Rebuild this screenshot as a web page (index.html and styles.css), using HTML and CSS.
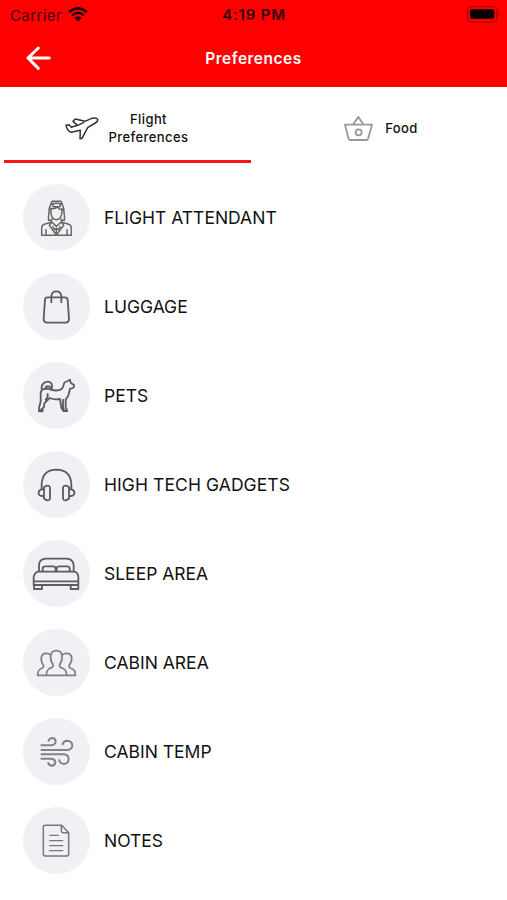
FILE: index.html
```html
<!DOCTYPE html>
<html lang="en">
<head>
<meta charset="utf-8">
<title>Preferences</title>
<link rel="stylesheet" href="styles.css">
</head>
<body>
<header class="header">
  <div class="status">
    <div class="carrier"><span>Carrier</span>
      <svg class="wifi" viewBox="0 0 60 44"><path d="M3 15Q30 -8 57 15" stroke-width="8"/><path d="M12 25Q30 9 48 25" stroke-width="7"/><path class="solid" d="M19 32Q30 23 41 32L30 43Z"/></svg>
    </div>
    <div class="time">4:19 PM</div>
    <svg class="battery" viewBox="0 0 99 51"><rect class="shell" x="2" y="2" width="88" height="46" rx="12"/><rect x="9" y="10" width="73" height="28" rx="5"/><path class="tip" d="M94 19q5 6 0 12z"/></svg>
  </div>
  <nav class="navbar">
    <svg class="back" viewBox="80 138 75 72"><path d="M150 174H86M117 144L86 174L117 205"/></svg>
    <h1 class="title">Preferences</h1>
  </nav>
</header>
<div class="tabs">
  <div class="tab active">
    <svg class="plane" viewBox="192 78 105 75"><path d="M198 106L207 104L214 112L233 106L219 94L226 87L255 94L275 85Q290 82 293 88Q294 94 286 99L263 113L246 145L240 146L241 121L214 127Q203 125 198 106ZM233 106L251 98"/></svg>
    <span class="tab-label">Flight<br>Preferences</span>
  </div>
  <div class="tab">
    <svg class="basket" viewBox="270 75 93 81"><path d="M276 104H357L345 147Q344 150 340 150H292Q288 150 287 147ZM301 103L316 81L331 103"/><circle cx="317" cy="127" r="9"/></svg>
    <span class="tab-label">Food</span>
  </div>
</div>
<main class="list">
  <div class="row">
    <svg class="icon" viewBox="21 18 201 201"><path d="M77 172V151Q77 141 87 138L107 132V124M166 172V151Q166 141 156 138L136 132V124M77 172H166M90 171V155M153 171V155M105 77L108 70H135L138 77M104 79Q121 73 139 79M104 80Q98 90 99 104Q96 114 98 127H107M139 80Q145 90 144 104Q147 114 145 127H136M105 92Q102 124 121 125Q140 124 138 92M104 91Q115 95 124 87Q128 95 140 95M111 79V86H132V79M107 132L100 142L121 171L143 142L136 132M107 132L121 145L136 132M110 146L116 155L121 151L127 155L133 146M121 151V170"/></svg>
    <span class="label">FLIGHT ATTENDANT</span>
  </div>
  <div class="row">
    <svg class="icon bold" viewBox="21 18 201 201"><path d="M94 91H147Q154 91 155 98L159 156Q159 167 148 167H94Q83 167 83 156L87 98Q88 91 94 91ZM106 106V88Q107 73 121 73Q135 73 136 88V106"/></svg>
    <span class="label">LUGGAGE</span>
  </div>
  <div class="row">
    <svg class="icon bold" viewBox="21 18 201 201"><path d="M105 101Q111 92 106 82Q99 74 87 79Q75 86 77 99M91 99Q86 94 92 91Q98 89 104 94M84 99Q94 95 105 101Q126 107 138 98Q142 94 144 82Q147 76 154 76L162 71L164 80L174 87V93Q171 98 162 98L158 115Q155 126 149 130V154L154 165H142L136 155L132 129Q113 132 101 126L85 142L84 153L79 158L80 166H69V155L74 137V116Q73 102 84 99ZM95 114Q97 124 89 131M141 131V154L145 164M77 159L72 165"/></svg>
    <span class="label">PETS</span>
  </div>
  <div class="row">
    <svg class="icon bold" viewBox="21 18 201 201"><path d="M77 132V117Q79 75 121 74Q164 75 166 117V132"/><path d="M84 126L93 122Q102 121 102 130V158Q102 167 93 166L84 161ZM159 126L150 122Q141 121 141 130V158Q141 167 150 166L159 161ZM83 133H77Q67 136 68 144Q67 151 77 153H83M160 133H166Q176 136 175 144Q176 151 166 153H160"/></svg>
    <span class="label wide">HIGH TECH GADGETS</span>
  </div>
  <div class="row">
    <svg class="icon bold" viewBox="21 18 201 201"><path d="M69 112V93Q70 75 90 74H152Q171 75 173 93V112M66 113H175Q187 116 187 130V153H53V130Q55 116 66 113ZM53 142H187M54 153V165H78V154M164 154V165H187V153M80 112V104Q80 97 88 97H111Q119 97 119 104V112M122 112V104Q122 97 130 97H153Q161 97 161 104V112"/></svg>
    <span class="label">SLEEP AREA</span>
  </div>
  <div class="row">
    <svg class="icon people" viewBox="21 18 201 201"><path d="M91 157C91 142 96 137 108 133C113 130 112 126 109 121C103 114 104 107 104 100C104 88 110 83 121 83C132 83 138 88 138 100C138 107 139 114 133 121C130 126 129 130 134 133C146 137 152 142 152 157ZM90 157H65C65 144 68 139 79 135C84 132 84 128 80 123C74 116 76 109 76 104C77 94 84 91 91 91Q99 91 103 96M152 157H178C178 144 175 139 163 135C158 132 158 128 162 123C168 116 167 109 167 104C166 94 159 91 151 91Q143 91 139 96"/></svg>
    <span class="label">CABIN AREA</span>
  </div>
  <div class="row">
    <svg class="icon wind" viewBox="21 18 201 201"><path d="M74 100H107Q119 98 119 88Q118 78 108 78Q99 79 97 89M74 114H155Q169 112 169 100Q168 87 154 86Q142 86 139 99M74 127H145Q158 129 158 141Q157 155 144 156Q131 155 129 142M74 140H107Q118 142 118 151Q117 161 107 161Q98 160 96 151"/></svg>
    <span class="label">CABIN TEMP</span>
  </div>
  <div class="row">
    <svg class="icon note" viewBox="21 18 201 201"><path d="M88 73H137L158 95V158Q158 165 151 165H88Q82 165 82 158V79Q82 73 88 73ZM136 74V90Q136 95 141 95H157"/><path class="thin" d="M101 103H128M101 119H140M101 134H140M101 149H140"/></svg>
    <span class="label">NOTES</span>
  </div>
</main>
</body>
</html>
```
FILE: styles.css
```css
* { box-sizing: border-box; }
body { margin: 0; background: #fff; color: #111; font-family: Inter, "Liberation Sans", sans-serif; }
svg { display: block; flex: none; fill: none; stroke-linecap: round; stroke-linejoin: round; }

.header { height: 87px; background: #f00; }
.status { height: 30px; padding: 0 7px 0 10px; display: grid; grid-template-columns: 1fr auto 1fr; align-items: center; color: #400000; font-size: 15px; }
.carrier { display: flex; align-items: center; gap: 6px; letter-spacing: .4px; }
.wifi { width: 20px; height: 15px; margin-top: -1px; stroke: #200000; }
.wifi path { stroke-linecap: butt; }
.wifi .solid { fill: #200000; stroke: none; }
.time { font-weight: 600; letter-spacing: .8px; margin: -1px 2px 0 0; color: #300000; }
.battery { width: 33px; height: 17px; margin-top: -2px; justify-self: end; fill: #000; }
.battery .shell { fill: none; stroke: #b00000; stroke-width: 4; }
.battery .tip { fill: #900000; }
.navbar { height: 56px; padding: 0 26px; display: grid; grid-template-columns: 25px 1fr 25px; align-items: center; }
.back { width: 25px; height: 24px; stroke: #fff; stroke-width: 9; }
.title { margin: 0; color: #fff; text-align: center; font-size: 15.5px; font-weight: 600; letter-spacing: .5px; }

.tabs { height: 76px; padding: 0 4px; display: grid; grid-template-columns: 247px 247px; gap: 5px; }
.tab { padding-top: 9px; display: flex; align-items: center; justify-content: center; gap: 10px; border-bottom: 3px solid transparent; }
.tab + .tab { padding-left: 2px; gap: 11px; }
.active { padding-right: 3px; border-bottom-color: #f9141a; }
.tab-label { font-size: 13px; line-height: 18px; font-weight: 500; letter-spacing: .4px; text-align: center; }
.plane { width: 35px; height: 25px; stroke: #333; stroke-width: 4.5; }
.basket { width: 31px; height: 27px; stroke: #999; stroke-width: 5.5; }

.list { padding: 21px 23px; display: flex; flex-direction: column; gap: 22px; }
.row { display: flex; align-items: center; gap: 14px; height: 67px; }
.icon { width: 67px; height: 67px; border-radius: 50%; background: #eff1f5; stroke: #666; stroke-width: 4.5; }
.bold { stroke: #5c5d60; stroke-width: 5.5; }
.people { stroke: #808184; stroke-width: 5.5; }
.wind { stroke: #828386; stroke-width: 6; stroke-linecap: butt; }
.note { stroke: #77787a; stroke-width: 4.5; }
.thin { stroke-width: 4; }
.label { padding-top: 1px; font-size: 17.5px; line-height: 24px; white-space: nowrap; }
.wide { letter-spacing: .08px; }
```
